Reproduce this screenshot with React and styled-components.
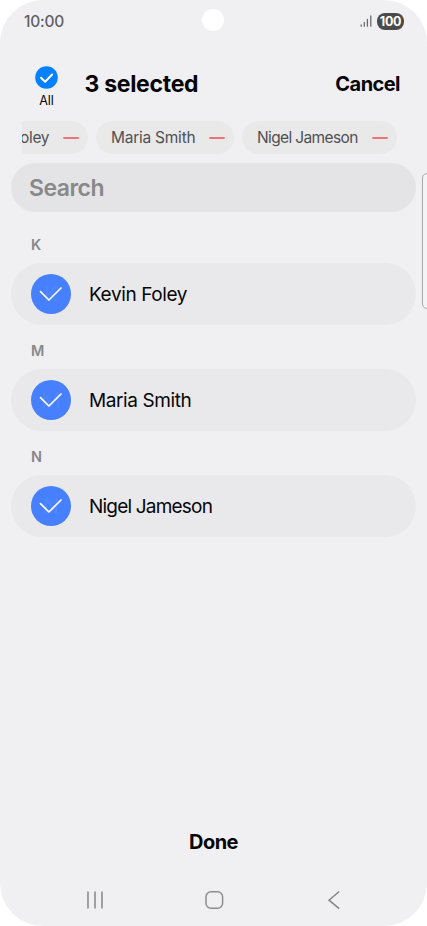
import React from "react";
import styled, { createGlobalStyle } from "styled-components";

const GlobalStyle = createGlobalStyle`
  * { box-sizing: border-box; }
  body { margin: 0; background: #fff; }
  button { border: 0; padding: 0; background: none; font: inherit; color: inherit; }
`;

const Screen = styled.main`
  position: relative;
  display: flex;
  flex-direction: column;
  width: 427px;
  height: 926px;
  overflow: hidden;
  border-radius: 43px;
  background: #f0f0f3;
  color: #050507;
  font-family: Inter, "Liberation Sans", sans-serif;
  white-space: nowrap;
`;

const StatusBar = styled.header`
  display: flex;
  align-items: center;
  justify-content: space-between;
  height: 42px;
  padding: 0 23px 0 24px;
`;

const Clock = styled.time`
  color: #606063;
  font-size: 15.5px;
  font-weight: 500;
  letter-spacing: -0.25px;
`;

const Camera = styled.div`
  position: absolute;
  top: 9px;
  left: 202px;
  width: 22px;
  height: 22px;
  border-radius: 50%;
  background: #fff;
`;

const StatusIcons = styled.div`
  display: flex;
  align-items: center;
  gap: 5px;
`;

const Battery = styled.span`
  display: flex;
  align-items: center;
  justify-content: center;
  width: 27px;
  height: 17px;
  border-radius: 8px;
  background: #4a4a4a;
  color: #fff;
  font-size: 12.5px;
  font-weight: 700;
  letter-spacing: -0.3px;
`;

const SelectionBar = styled.section`
  display: flex;
  align-items: center;
  height: 79px;
  padding: 4px 27px 0 31px;
`;

const SelectAll = styled.button`
  display: flex;
  flex-direction: column;
  align-items: center;
  gap: 4px;
  width: 31px;
  padding-top: 8px;
  font-size: 12.5px;
  line-height: 16px;
  letter-spacing: -0.1px;
`;

const Title = styled.h1`
  flex: 1;
  margin: 0 0 0 22.5px;
  font-size: 23px;
  line-height: 28px;
  font-weight: 700;
  letter-spacing: -0.3px;
`;

const Cancel = styled.button`
  font-size: 20px;
  line-height: 24px;
  font-weight: 700;
  letter-spacing: -0.55px;
`;

const ChipStrip = styled.div`
  display: flex;
  justify-content: flex-end;
  gap: 8px;
  height: 33px;
  margin: 0 30px 0 22px;
  overflow: hidden;
`;

const Chip = styled.div`
  display: flex;
  flex: none;
  align-items: center;
  justify-content: space-between;
  width: ${(p) => p.$width}px;
  padding: 0 9px 0 15px;
  border-radius: 17px;
  background: #e9e9ea;
  color: #505053;
  font-size: 15.5px;
  letter-spacing: ${(p) => p.$spacing}px;
`;

const Remove = styled.span`
  width: 16px;
  height: 2px;
  border-radius: 1px;
  background: #f07676;
`;

const Search = styled.div`
  display: flex;
  align-items: center;
  height: 49px;
  margin: 9px 11px 0;
  padding: 1px 18px 0;
  border-radius: 25px;
  background: #e4e4e6;
  color: #88888a;
  font-size: 23px;
  font-weight: 600;
  letter-spacing: -0.5px;
`;

const Contacts = styled.div`
  flex: 1;
  padding: 0 11px;
`;

const Group = styled.section`
  height: 106px;
  padding-top: 24px;
`;

const Letter = styled.h2`
  height: 27px;
  margin: 0 0 0 20px;
  color: #88888b;
  font-size: 14.5px;
  line-height: 18px;
  font-weight: 600;
`;

const ContactRow = styled.div`
  display: flex;
  align-items: center;
  gap: 18px;
  height: 62px;
  padding-left: 20px;
  border-radius: 31px;
  background: #e9e9eb;
`;

const Avatar = styled.div`
  display: grid;
  place-items: center;
  width: 40px;
  height: 40px;
  border-radius: 50%;
  background: #4680ff;
  color: #4f86fb;
  font-size: 22px;

  > * { grid-area: 1 / 1; }
`;

const Name = styled.span`
  font-size: 19px;
  letter-spacing: ${(p) => p.$spacing}px;
`;

const Footer = styled.div`
  display: flex;
  align-items: center;
  justify-content: center;
  height: 62px;
`;

const Done = styled.button`
  font-size: 20px;
  font-weight: 700;
  letter-spacing: -0.55px;
`;

const NavBar = styled.nav`
  display: flex;
  justify-content: space-between;
  height: 53px;
  padding: 17px 83px 0 85px;
`;

const EdgePanel = styled.aside`
  position: absolute;
  top: 173px;
  left: 422px;
  width: 12px;
  height: 136px;
  border: 1px solid #a9a9ac;
  border-radius: 5px;
  background: #f4f4f6;
`;

const chips = [
  { name: "Kevin Foley", width: 134, spacing: -0.3 },
  { name: "Maria Smith", width: 138, spacing: -0.25 },
  { name: "Nigel Jameson", width: 155, spacing: -0.63 },
];

const contacts = [
  { name: "Kevin Foley", spacing: -0.4 },
  { name: "Maria Smith", spacing: -0.4 },
  { name: "Nigel Jameson", spacing: -0.8 },
];

export default function App() {
  return (
    <>
      <GlobalStyle />
      <Screen>
        <StatusBar>
          <Clock>10:00</Clock>
          <StatusIcons>
            <svg width="12" height="12" fill="none" stroke="#6b6b6e" strokeWidth="1.3" strokeLinecap="round">
              <path d="M1.2 10v1.2M4.3 7.5v3.7M7.4 4.3v6.9M10.8 1v10.2" />
            </svg>
            <Battery>100</Battery>
          </StatusIcons>
        </StatusBar>
        <Camera />
        <SelectionBar>
          <SelectAll>
            <svg width="23" height="23" fill="none">
              <circle cx="11.5" cy="11.5" r="11.3" fill="#0581ff" />
              <path d="m6 11.7 4.1 4 7-7.2" stroke="#fff" strokeWidth="2" strokeLinecap="round" strokeLinejoin="round" />
            </svg>
            All
          </SelectAll>
          <Title>3 selected</Title>
          <Cancel>Cancel</Cancel>
        </SelectionBar>
        <ChipStrip>
          {chips.map((c) => (
            <Chip key={c.name} $width={c.width} $spacing={c.spacing}>
              {c.name}
              <Remove />
            </Chip>
          ))}
        </ChipStrip>
        <Search>Search</Search>
        <Contacts>
          {contacts.map((c) => (
            <Group key={c.name}>
              <Letter>{c.name[0]}</Letter>
              <ContactRow>
                <Avatar>
                  <span>{c.name[0]}</span>
                  <svg width="40" height="40" fill="none" stroke="#fff" strokeWidth="1.7" strokeLinecap="round" strokeLinejoin="round">
                    <path d="m9.5 17.6 8.4 8.4L30 14" />
                  </svg>
                </Avatar>
                <Name $spacing={c.spacing}>{c.name}</Name>
              </ContactRow>
            </Group>
          ))}
        </Contacts>
        <Footer>
          <Done>Done</Done>
        </Footer>
        <NavBar>
          <svg width="20" height="20" stroke="#929295" strokeWidth="1.7">
            <path d="M3 1.5v17M10 1.5v17M17 1.5v17" />
          </svg>
          <svg width="20" height="20" fill="none" stroke="#8d8d90" strokeWidth="1.5">
            <rect x="1" y="1.7" width="16.6" height="16.6" rx="5" />
          </svg>
          <svg width="20" height="20" fill="none" stroke="#858588" strokeWidth="1.5">
            <path d="M15.2 1.5 5 10.2l10.2 8.5" />
          </svg>
        </NavBar>
        <EdgePanel />
      </Screen>
    </>
  );
}
